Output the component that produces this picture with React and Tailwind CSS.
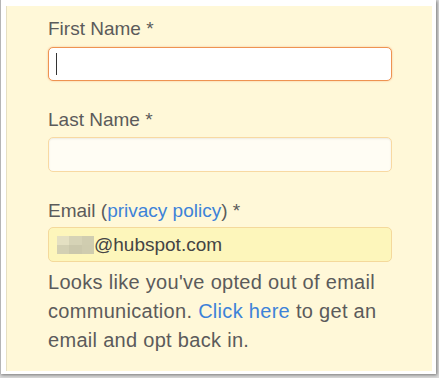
export default function App() {
  return (
    <div className="w-[439px] h-[378px] bg-[#d9d9d9] relative">
      {/* Cadre de la capture avec ombre */}
      <div className="w-[436px] h-[374px] bg-white border-l border-[#b5b5b5] shadow-[1px_1px_3px_rgba(0,0,0,0.45)] pt-[6px] pl-[5px]">
        <div
          className="w-[426px] h-[365px] bg-[#fff8d8] border-l border-[#e6dfc2] pt-[11px] pl-[41px] text-[#5b5b5b] text-[19px]"
          style={{ fontFamily: '"Liberation Sans", Arial, sans-serif' }}
        >
          {/* Prénom */}
          <div className="leading-[24px]">First Name *</div>
          <div className="mt-[6px] w-[344px] h-[34px] bg-white border border-[#ee9352] rounded-[5px] shadow-[0_0_2px_rgba(238,147,82,0.6)] flex items-center pl-[7px]">
            <div className="w-px h-[22px] bg-[#333]"></div>
          </div>

          {/* Nom */}
          <div className="mt-[27px] leading-[24px]">Last Name *</div>
          <div className="mt-[5px] w-[344px] h-[35px] bg-[#fffdf4] border border-[#f8d9a2] rounded-[5px] shadow-[inset_0_1px_2px_rgba(0,0,0,0.08)]"></div>

          {/* Email */}
          <div className="mt-[27px] leading-[24px]">
            Email (<span className="text-[#3d82d8]">privacy policy</span>) *
          </div>
          <div className="mt-[4px] w-[344px] h-[35px] bg-[#fdf6bb] border border-[#f4d99b] rounded-[5px] flex items-center pl-[8px]">
            <div className="grid grid-cols-3 w-[37px] h-[18px]">
              <div className="bg-[#e4e0c2]"></div>
              <div className="bg-[#d6d3b6]"></div>
              <div className="bg-[#d0cdb0]"></div>
              <div className="bg-[#d3d0b3]"></div>
              <div className="bg-[#cbc8ac]"></div>
              <div className="bg-[#cfccaf]"></div>
            </div>
            <span className="text-[#444] leading-[24px]">@hubspot.com</span>
          </div>

          {/* Message de désinscription */}
          <p className="mt-[6px] leading-[29px] w-[344px] text-[20px] tracking-[0.3px]">
            Looks like you've opted out of email communication.{" "}
            <span className="text-[#3d82d8]">Click here</span> to get an email
            and opt back in.
          </p>
        </div>
      </div>
    </div>
  );
}
